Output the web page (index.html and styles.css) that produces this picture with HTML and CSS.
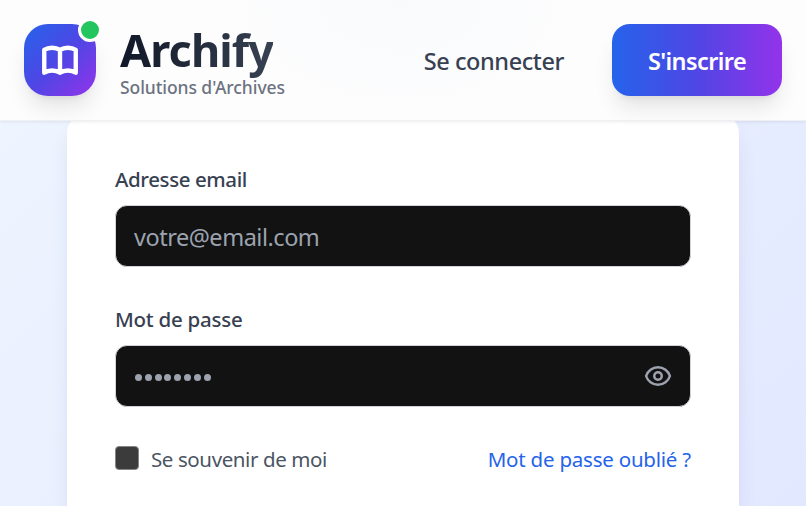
FILE: index.html
```
<!DOCTYPE html>
<html lang="fr">
<head>
<meta charset="utf-8">
<title>Archify</title>
<link rel="stylesheet" href="styles.css">
</head>
<body>
<header class="header">
  <a class="brand">
    <span class="logo">
      <svg width="42" height="42" viewBox="0 0 24 24" fill="none" stroke="currentColor" stroke-width="2.5" stroke-linecap="round" stroke-linejoin="round"><path d="M12 6.253v13m0-13C10.832 5.477 9.246 5 7.5 5S4.168 5.477 3 6.253v13C4.168 18.477 5.754 18 7.5 18s3.332.477 4.5 1.253m0-13C13.168 5.477 14.754 5 16.5 5c1.747 0 3.332.477 4.5 1.253v13C19.832 18.477 18.247 18 16.5 18c-1.746 0-3.332.477-4.5 1.253"/></svg>
      <span class="status"></span>
    </span>
    <span class="brand-text">
      <span class="name">Archify</span>
      <span class="tagline">Solutions d'Archives</span>
    </span>
  </a>
  <nav class="nav">
    <a class="login"><span>Se connecter</span></a>
    <a class="signup"><span>S'inscrire</span></a>
  </nav>
</header>
<main class="card">
  <div class="field">
    <label class="label email-label">Adresse email</label>
    <div class="input"><span class="placeholder">votre@email.com</span></div>
  </div>
  <div class="field">
    <label class="label password-label">Mot de passe</label>
    <div class="input">
      <span class="dots"><i></i><i></i><i></i><i></i><i></i><i></i><i></i><i></i></span>
      <svg class="eye" width="30" height="30" viewBox="0 0 24 24" fill="none" stroke="currentColor" stroke-width="2" stroke-linecap="round" stroke-linejoin="round"><path d="M15 12a3 3 0 11-6 0 3 3 0 016 0z"/><path d="M2.458 12C3.732 7.943 7.523 5 12 5c4.478 0 8.268 2.943 9.542 7-1.274 4.057-5.064 7-9.542 7-4.477 0-8.268-2.943-9.542-7z"/></svg>
    </div>
  </div>
  <div class="options">
    <span class="remember"><span class="checkbox"></span><span class="remember-text">Se souvenir de moi</span></span>
    <a class="forgot">Mot de passe oublié ?</a>
  </div>
</main>
</body>
</html>
```
FILE: styles.css
```
* { box-sizing: border-box; }
body {
  margin: 0;
  height: 506px;
  overflow: hidden;
  font-family: "Segoe UI", "Noto Sans", sans-serif;
  color: #374151;
  white-space: nowrap;
  background: linear-gradient(135deg, #eff6ff, #e2e8ff);
}
.header {
  position: relative;
  z-index: 1;
  height: 121px;
  padding: 0 24px;
  display: flex;
  justify-content: space-between;
  align-items: center;
  background: radial-gradient(ellipse 170px 110px at 400px 0, #f8fafb, #fdfdfe);
  border-bottom: 1px solid #f0f1f4;
  box-shadow: 0 1px 3px rgba(0, 0, 0, .07);
}
.brand, .nav, .remember { display: flex; align-items: center; }
.brand { gap: 24px; }
.logo {
  position: relative;
  width: 72px;
  height: 72px;
  display: grid;
  place-items: center;
  color: #fff;
  border-radius: 24px;
  background: linear-gradient(135deg, #2563eb, #4f46e5 50%, #9333ea);
  box-shadow: 0 15px 22px -4px rgba(0, 0, 0, .1), 0 6px 9px -6px rgba(0, 0, 0, .1);
}
.status {
  position: absolute;
  top: -6px;
  right: -6px;
  width: 24px;
  height: 24px;
  border: 3px solid #fff;
  border-radius: 50%;
  background: #22c55e;
}
.brand-text { display: flex; flex-direction: column; padding-top: 4px; }
.name {
  font-size: 45px;
  font-weight: 700;
  line-height: 60px;
  letter-spacing: -.9px;
  margin: -6px 0;
  color: transparent;
  background: linear-gradient(90deg, #111827, #374151);
  background-clip: text;
  align-self: flex-start;
}
.tagline { font-size: 17.5px; font-weight: 500; line-height: 24px; letter-spacing: -.08px; padding-top: 1px; color: #6b7280; }
.nav { gap: 48px; }
.login { font-size: 23.5px; font-weight: 500; letter-spacing: -.42px; padding-top: 2px; }
.signup {
  width: 170px;
  height: 72px;
  padding-top: 2px;
  display: grid;
  place-items: center;
  font-size: 23.5px;
  font-weight: 600;
  letter-spacing: -.6px;
  color: #fff;
  border-radius: 18px;
  background: linear-gradient(90deg, #2563eb, #4f46e5 50%, #9333ea);
  box-shadow: 0 15px 22px -4px rgba(0, 0, 0, .1), 0 6px 9px -6px rgba(0, 0, 0, .1);
}
.card {
  width: 672px;
  height: 391px;
  margin: -6px auto 0;
  padding: 49px 48px 0;
  background: #fff;
  border-radius: 18px 18px 0 0;
  box-shadow: 0 15px 22px -4px rgba(30, 50, 100, .1), 0 6px 9px -6px rgba(30, 50, 100, .1);
}
.field { margin-bottom: 37px; }
.label { display: block; height: 30px; margin-bottom: 11px; font-size: 20.5px; font-weight: 500; line-height: 30px; letter-spacing: -.4px; }
.password-label { letter-spacing: -.25px; }
.input {
  height: 62px;
  display: flex;
  align-items: center;
  justify-content: space-between;
  padding: 0 17px;
  border: 1px solid #d1d5db;
  border-radius: 12px;
  background: #121212;
  color: #9ca3af;
  font-size: 23.5px;
}
.placeholder { letter-spacing: -.48px; padding: 2px 0 0 1px; }
.dots { display: flex; gap: 2.8px; padding: 3px 0 0 2px; }
.dots i { width: 7px; height: 7px; border-radius: 50%; background: currentColor; }
.options { display: flex; justify-content: space-between; align-items: center; height: 26px; margin-top: 38px; font-size: 20.5px; }
.remember { gap: 12px; color: #4b5563; }
.remember-text { letter-spacing: -.4px; padding-top: 2px; }
.checkbox { width: 24px; height: 24px; border: 1.5px solid #858585; border-radius: 4px; background: #3b3b3b; }
.forgot { color: #2563eb; letter-spacing: -.22px; padding-top: 2px; }
```
